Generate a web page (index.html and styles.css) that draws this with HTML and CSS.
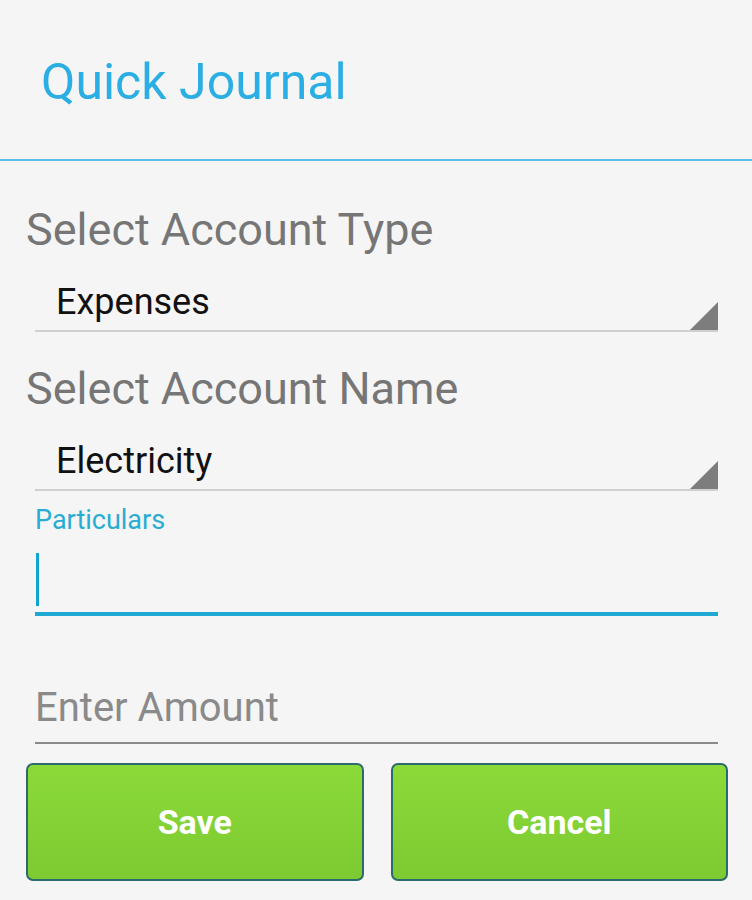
FILE: index.html
```html
<!DOCTYPE html>
<html>
    <head>
        <meta charset="utf-8">
        <title>Quick Journal</title>
        <link rel="stylesheet" href="styles.css">
    </head>
    <body>
        <div class="dialog">
            <div class="dialog-header">
                <h1 class="dialog-title">Quick Journal</h1>
            </div>

            <div class="dialog-body">
                <div class="section-label">Select Account Type</div>
                <div class="spinner">
                    <span class="spinner-value">Expenses</span>
                    <span class="spinner-arrow"></span>
                </div>

                <div class="section-label">Select Account Name</div>
                <div class="spinner">
                    <span class="spinner-value">Electricity</span>
                    <span class="spinner-arrow"></span>
                </div>

                <div class="field field-focused">
                    <label class="field-label">Particulars</label>
                    <div class="field-input"><span class="cursor"></span></div>
                </div>

                <div class="field">
                    <div class="field-input"><span class="hint">Enter Amount</span></div>
                </div>

                <div class="buttons">
                    <button class="btn">Save</button>
                    <button class="btn">Cancel</button>
                </div>
            </div>
        </div>
    </body>
</html>
```

FILE: styles.css
```css
*{
    box-sizing: border-box;
}

body{
    margin: 0;
    background-color: #f5f5f5;
    font-family: Roboto, "Liberation Sans", sans-serif;
}

.dialog{
    width: 752px;
    height: 900px;
    background-color: #f5f5f5;
}

.dialog-header{
    height: 161px;
    padding: 52px 0 0 41px;
    border-bottom: 2px solid #5dbde6;
}

.dialog-title{
    margin: 0;
    font-size: 50px;
    font-weight: 400;
    line-height: 60px;
    color: #2aaee3;
}

.dialog-body{
    padding: 0 24px 0 26px;
}

.section-label{
    margin-top: 42px;
    font-size: 45px;
    line-height: 54px;
    color: #767676;
}

.spinner{
    position: relative;
    margin: 0 10px 0 9px;
    height: 75px;
    padding: 25px 0 0 21px;
    border-bottom: 2px solid #cfcfcf;
}

.spinner + .section-label{
    margin-top: 30px;
}

.spinner-value{
    font-size: 36px;
    line-height: 40px;
    color: #111;
}

.spinner-arrow{
    position: absolute;
    right: 0;
    bottom: 0;
    width: 0;
    height: 0;
    border-style: solid;
    border-width: 0 0 28px 28px;
    border-color: transparent transparent #7d7d7d transparent;
}

.field{
    margin: 0 10px 0 9px;
}

.field-label{
    display: block;
    margin-top: 13px;
    font-size: 27px;
    line-height: 32px;
    color: #29acd3;
}

.field-input{
    height: 80px;
    padding-top: 17px;
    border-bottom: 2px solid #8a8a8a;
}

.field-focused .field-input{
    border-bottom: 4px solid #1fa8d1;
}

.field + .field{
    margin-top: 47px;
}

.field + .field .field-input{
    height: 81px;
    padding-top: 20px;
}

.cursor{
    display: block;
    width: 3px;
    height: 53px;
    margin-left: 1px;
    background-color: #14a3cc;
}

.hint{
    font-size: 40px;
    line-height: 50px;
    color: #8a8a8a;
}

.buttons{
    display: flex;
    gap: 27px;
    margin-top: 19px;
}

.btn{
    flex: 1;
    height: 118px;
    border: 2px solid #2b6b6e;
    border-radius: 7px;
    background: linear-gradient(#8bda39, #7dca31);
    font-family: Roboto, "Liberation Sans", sans-serif;
    font-size: 34px;
    font-weight: 700;
    color: #fff;
}
```
